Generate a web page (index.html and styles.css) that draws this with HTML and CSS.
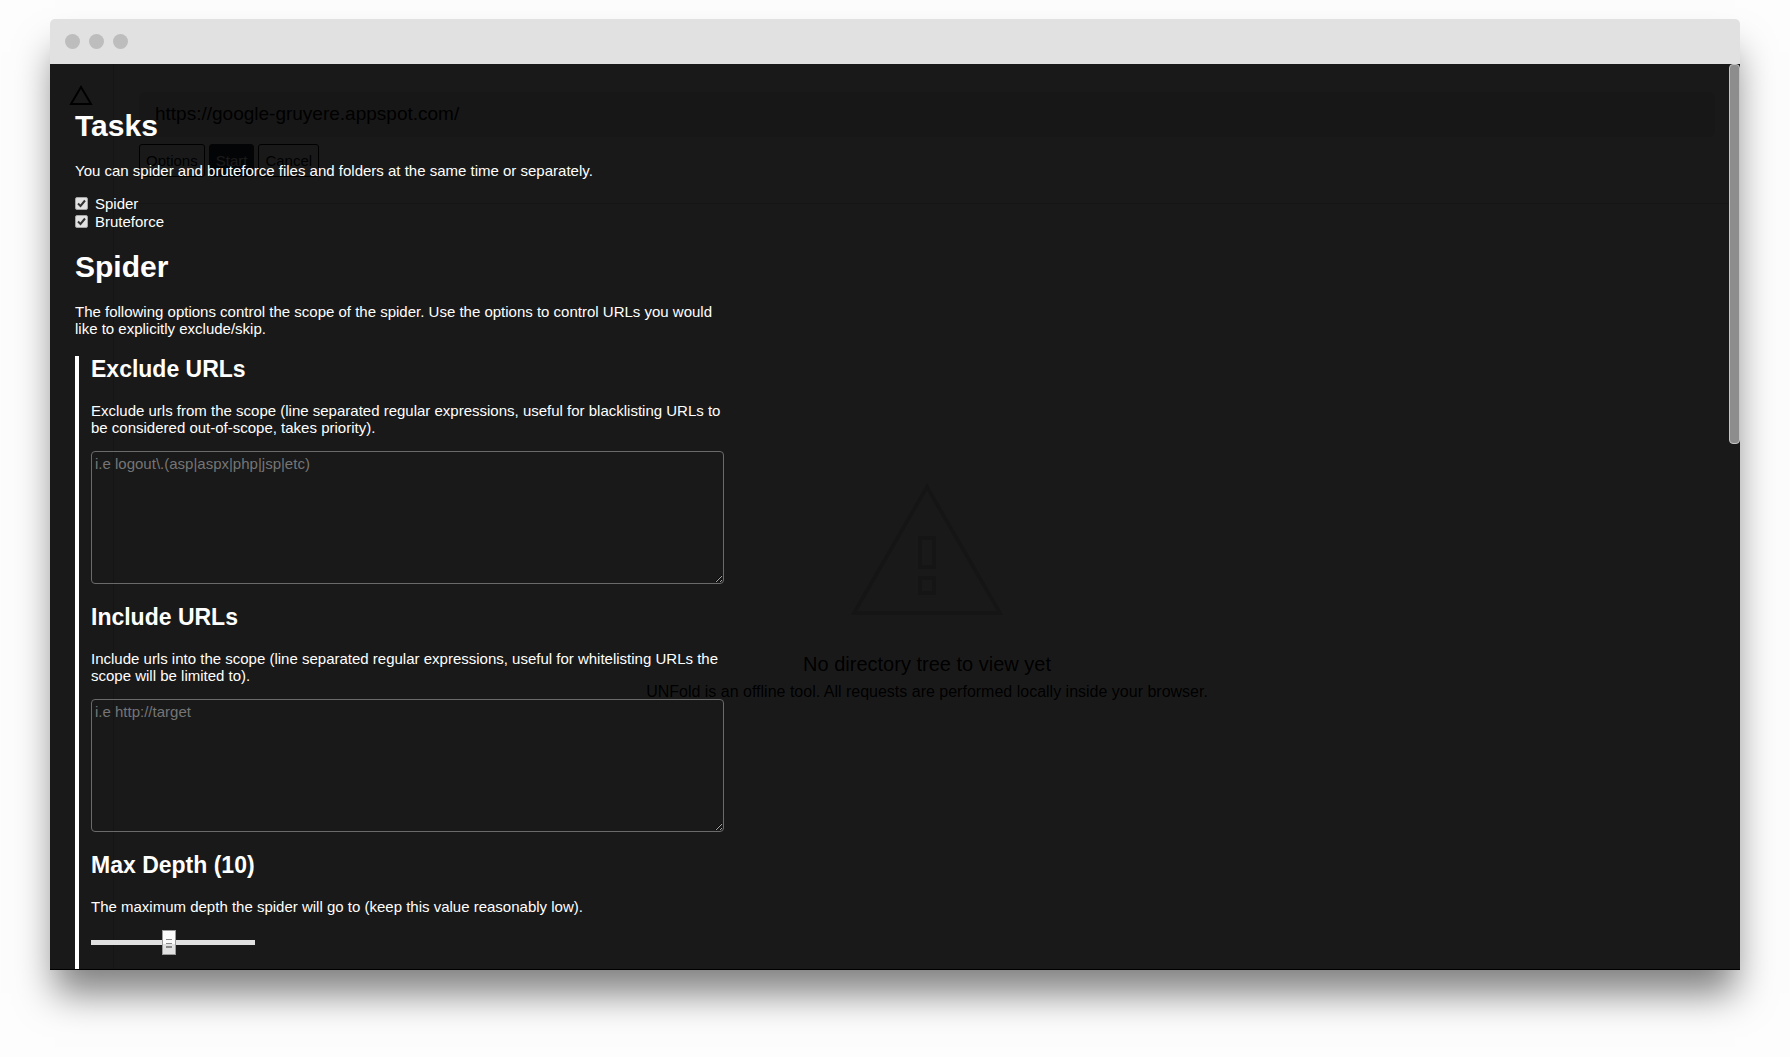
FILE: index.html
```html
<!DOCTYPE html>
<html lang="en">
<head>
    <meta charset="UTF-8">
    <meta name="viewport" content="width=device-width, initial-scale=1.0">
    <title>UNFold</title>
    <link rel="stylesheet" href="styles.css">
</head>
<body>

    <div class="window">
        <div class="titlebar">
            <span class="dot"></span>
            <span class="dot"></span>
            <span class="dot"></span>
        </div>

        <div class="screen">
            <!-- Main app, dimmed while the options are open -->
            <div class="app">
                <aside class="sidebar">
                    <svg width="24" height="21" viewBox="0 0 24 21">
                        <path d="M12 2 L22 19 H2 Z" fill="none" stroke="#000" stroke-width="2"></path>
                    </svg>
                </aside>
                <main class="main">
                    <div class="toolbar">
                        <input class="target" type="text" aria-label="Target URL" value="https://google-gruyere.appspot.com/">
                        <div class="actions">
                            <button type="button" class="btn">Options</button>
                            <button type="button" class="btn btn-primary">Start</button>
                            <button type="button" class="btn">Cancel</button>
                        </div>
                    </div>
                    <div class="empty">
                        <svg width="154" height="134" viewBox="0 0 154 134">
                            <g fill="none" stroke="#d2d2d2" stroke-width="4">
                                <path d="M77 5 L150 131 H4 Z"></path>
                                <rect x="70" y="56" width="14" height="29"></rect>
                                <rect x="70" y="96" width="14" height="15"></rect>
                            </g>
                        </svg>
                        <p class="empty-title">No directory tree to view yet</p>
                        <p class="empty-text">UNFold is an offline tool. All requests are performed locally inside your browser.</p>
                    </div>
                </main>
            </div>

            <!-- Options overlay -->
            <div class="overlay">
                <form class="options">
                    <h1>Tasks</h1>
                    <p>You can spider and bruteforce files and folders at the same time or separately.</p>
                    <label class="check"><input type="checkbox" checked> Spider</label>
                    <label class="check"><input type="checkbox" checked> Bruteforce</label>

                    <h1>Spider</h1>
                    <p>The following options control the scope of the spider. Use the options to control URLs you would like to explicitly exclude/skip.</p>

                    <div class="group">
                        <h2><label for="exclude">Exclude URLs</label></h2>
                        <p>Exclude urls from the scope (line separated regular expressions, useful for blacklisting URLs to be considered out-of-scope, takes priority).</p>
                        <textarea id="exclude" placeholder="i.e logout\.(asp|aspx|php|jsp|etc)"></textarea>

                        <h2><label for="include">Include URLs</label></h2>
                        <p>Include urls into the scope (line separated regular expressions, useful for whitelisting URLs the scope will be limited to).</p>
                        <textarea id="include" placeholder="i.e http://target"></textarea>

                        <h2><label for="depth">Max Depth (10)</label></h2>
                        <p>The maximum depth the spider will go to (keep this value reasonably low).</p>
                        <input type="range" id="depth" min="1" max="20" value="10">
                    </div>
                </form>
                <div class="scroll-thumb"></div>
            </div>
        </div>
    </div>

</body>
</html>
```
FILE: styles.css
```css
* {
    box-sizing: border-box;
}

body {
    font-family: "Liberation Sans", Arial, sans-serif;
    font-size: 15px;
    line-height: 17px;
    background-color: #fdfdfd;
    margin: 0;
    padding: 19px 50px 87px;
    height: 100vh;
    display: flex;
    flex-direction: column;
}

h1, h2, p {
    margin: 0;
}

.window {
    flex: 1;
    min-height: 0;
    display: flex;
    flex-direction: column;
    border-radius: 5px 5px 0 0;
    box-shadow: 0 28px 36px -5px rgba(0, 0, 0, 0.5);
}

.titlebar {
    display: flex;
    align-items: center;
    gap: 9px;
    height: 45px;
    padding: 0 15px;
    background-color: #e1e1e1;
    border-radius: 5px 5px 0 0;
}

.dot {
    width: 15px;
    height: 15px;
    border-radius: 50%;
    background-color: #bdbdbd;
}

.screen {
    position: relative;
    flex: 1;
    min-height: 0;
    overflow: hidden;
    background-color: #fff;
    border-bottom: 1px solid #000;
}

/* app */
.app {
    display: flex;
    height: 100%;
}

.sidebar {
    width: 64px;
    padding: 21px 19px;
    border-right: 1px solid #d2d2d2;
}

.main {
    flex: 1;
    display: flex;
    flex-direction: column;
}

.toolbar {
    padding: 28px 25px 26px;
    border-bottom: 1px solid #d2d2d2;
}

.target {
    display: block;
    width: 100%;
    height: 45px;
    padding: 0 16px 2px;
    border: none;
    border-radius: 6px;
    background-color: #e4e4e4;
    color: #000;
    font-family: inherit;
    font-size: 19px;
}

.actions {
    display: flex;
    gap: 4px;
    margin-top: 7px;
}

.btn {
    height: 33px;
    padding: 0 6px;
    border: 1px solid #000;
    border-radius: 3px;
    background-color: #fff;
    color: #000;
    font-family: inherit;
    font-size: 15px;
}

.btn-primary {
    border-color: #212a3a;
    background-color: #212a3a;
    color: #fff;
}

.empty {
    flex: 1;
    display: flex;
    flex-direction: column;
    align-items: center;
    justify-content: center;
    padding-top: 11px;
    color: #000;
}

.empty-title {
    margin-top: 36px;
    font-size: 20px;
    line-height: 24px;
}

.empty-text {
    margin-top: 6px;
    font-size: 16px;
    line-height: 20px;
}

/* options */
.overlay {
    position: absolute;
    inset: 0;
    display: flex;
    background-color: rgba(0, 0, 0, 0.9);
    color: #fff;
}

.options {
    display: flex;
    flex-direction: column;
    width: 100%;
    max-width: 674px;
    padding: 44px 0 0 25px;
}

h1 {
    margin-bottom: 19px;
    font-size: 30px;
    line-height: 35px;
}

h2 {
    margin-bottom: 20px;
    font-size: 23px;
    line-height: 26px;
}

.options p {
    margin-bottom: 15px;
}

.check {
    display: flex;
    align-items: center;
    gap: 7px;
    height: 18px;
}

.check + h1 {
    margin-top: 19px;
}

.check input {
    appearance: none;
    width: 13px;
    height: 13px;
    margin: 0;
    border: 1px solid #a5a5a5;
    border-radius: 2px;
    background: #e2e2e2 url("data:image/svg+xml,%3Csvg xmlns='http://www.w3.org/2000/svg' viewBox='0 0 11 11'%3E%3Cpath d='M2 5.5 L4.5 8 L9 2.5' fill='none' stroke='%23333' stroke-width='2'/%3E%3C/svg%3E");
}

.group {
    flex: 1;
    display: flex;
    flex-direction: column;
    align-items: flex-start;
    margin-top: 4px;
    padding-left: 12px;
    border-left: 4px solid #fff;
}

textarea {
    width: 100%;
    height: 133px;
    margin-bottom: 20px;
    padding: 3px;
    border: 1px solid #6a6a6a;
    border-radius: 4px;
    background-color: transparent;
    color: #fff;
    font-family: inherit;
    font-size: 15px;
    line-height: 17px;
}

textarea::placeholder {
    color: #757575;
}

input[type="range"] {
    appearance: none;
    width: 164px;
    height: 24px;
    margin: 0;
    background: transparent;
}

input[type="range"]::-webkit-slider-runnable-track {
    height: 5px;
    background-color: #e1e1e1;
}

input[type="range"]::-webkit-slider-thumb {
    appearance: none;
    width: 14px;
    height: 25px;
    margin-top: -10px;
    border: 1px solid #999;
    background:
        linear-gradient(#888, #888) 50% 8px / 6px 1px no-repeat,
        linear-gradient(#888, #888) 50% 12px / 6px 1px no-repeat,
        linear-gradient(#888, #888) 50% 15px / 6px 2px no-repeat,
        linear-gradient(#fafafa 55%, #e1e1e1 55%);
}

.scroll-thumb {
    position: absolute;
    top: 0;
    right: 0;
    width: 11px;
    height: 42%;
    border: 1px solid #c4c4c4;
    border-radius: 4px;
    background-color: #8d8d8d;
}
```
